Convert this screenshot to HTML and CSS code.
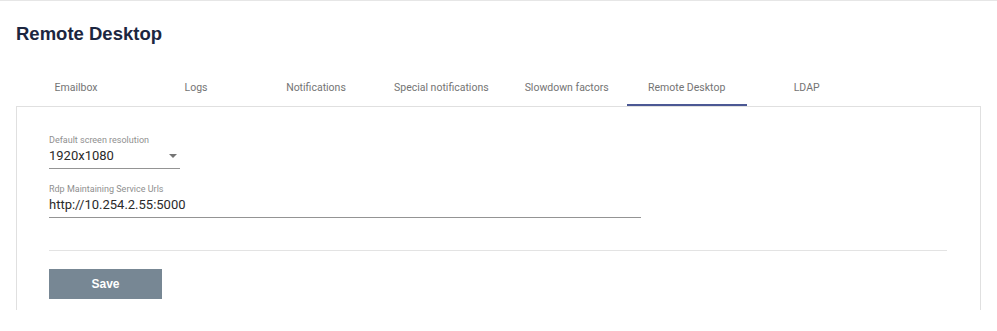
FILE: index.html
```html
<!DOCTYPE html>
<html lang="en">
<head>
    <meta charset="UTF-8">
    <meta name="viewport" content="width=device-width, initial-scale=1.0">
    <title>Remote Desktop</title>
    <link rel="stylesheet" href="styles.css">
</head>
<body>
    <div class="page">
        <h1>Remote Desktop</h1>

        <div class="tabs">
            <div class="tab">Emailbox</div>
            <div class="tab">Logs</div>
            <div class="tab">Notifications</div>
            <div class="tab">Special notifications</div>
            <div class="tab">Slowdown factors</div>
            <div class="tab active">Remote Desktop</div>
            <div class="tab">LDAP</div>
        </div>

        <div class="panel">
            <div class="field field-select">
                <label>Default screen resolution</label>
                <div class="value">
                    <span>1920x1080</span>
                    <span class="arrow"></span>
                </div>
            </div>

            <div class="field field-wide">
                <label>Rdp Maintaining Service Urls</label>
                <div class="value">http://10.254.2.55:5000</div>
            </div>

            <div class="divider"></div>

            <button type="button">Save</button>
        </div>
    </div>
</body>
</html>
```

FILE: styles.css
```css
body {
    margin: 0;
    font-family: Roboto, "Liberation Sans", Arial, sans-serif;
    color: #222;
    background: #fff;
}
.page {
    border-top: 1px solid #e6e6e6;
    padding: 0 16px;
}
h1 {
    margin: 0;
    padding-top: 21px;
    font-family: "Liberation Sans", Arial, sans-serif;
    font-size: 18.5px;
    line-height: 24px;
    font-weight: bold;
    color: #1c2640;
}
.tabs {
    display: flex;
    margin-top: 25px;
    border-bottom: 1px solid #e0e0e0;
}
.tab {
    min-width: 120px;
    box-sizing: border-box;
    padding: 0 18px;
    height: 35px;
    line-height: 33px;
    text-align: center;
    font-size: 10.5px;
    color: #747474;
    border-bottom: 2px solid transparent;
    white-space: nowrap;
}
.tab.active {
    border-bottom-color: #4b5894;
}
.panel {
    border-left: 1px solid #e0e0e0;
    border-right: 1px solid #e0e0e0;
    padding: 27px 33px 11px 32px;
}
.field label {
    display: block;
    font-size: 9px;
    line-height: 12px;
    color: #8f8f8f;
}
.field .value {
    display: flex;
    justify-content: space-between;
    align-items: center;
    font-size: 13px;
    line-height: 20px;
    padding-bottom: 2px;
    border-bottom: 1px solid #949494;
    color: #2a2a2a;
}
.field-select {
    width: 131px;
}
.field-wide {
    width: 592px;
    margin-top: 14px;
}
.arrow {
    width: 0;
    height: 0;
    margin-right: 3px;
    border-left: 4px solid transparent;
    border-right: 4px solid transparent;
    border-top: 4px solid #757575;
}
.divider {
    margin-top: 32px;
    border-top: 1px solid #e3e3e3;
}
button {
    margin-top: 18px;
    width: 113px;
    height: 30px;
    background-color: #778794;
    color: #fff;
    border: none;
    font-family: "Liberation Sans", Arial, sans-serif;
    font-size: 12px;
    font-weight: bold;
    cursor: pointer;
}
```
